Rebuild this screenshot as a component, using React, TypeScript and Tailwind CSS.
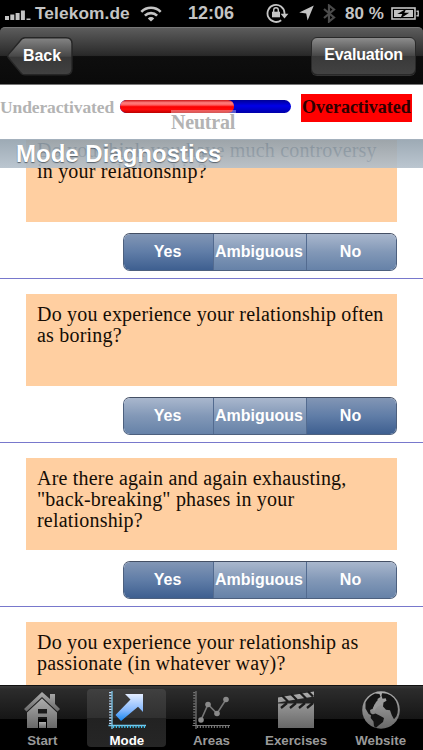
import { clsx } from 'clsx';

const QUESTIONS = [
  { lines: ['Do you think you have much controversy', 'in your relationship?'], answer: 'Yes' },
  { lines: ['Do you experience your relationship often', 'as boring?'], answer: 'No' },
  { lines: ['Are there again and again exhausting,', '"back-breaking" phases in your', 'relationship?'], answer: 'Yes' },
  { lines: ['Do you experience your relationship as', 'passionate (in whatever way)?'] },
];

const OPTIONS = [
  { label: 'Yes', width: 'w-[90px]' },
  { label: 'Ambiguous', width: 'w-[93px]' },
  { label: 'No', width: 'w-[89px]' },
];

const HELVETICA = "font-['Liberation_Sans',Arial,sans-serif]";
const PALATINO = "font-['Palatino','Liberation_Serif',serif]";

function StatusBar() {
  return (
    <div className="flex h-[27px] shrink-0 items-center bg-black text-[17.3px] font-bold leading-[27px] text-[#c4c4c4]">
      <svg width="26" height="12" viewBox="0 0 26 12" className="ml-[5px] mt-[2px]" fill="#c4c4c4">
        <rect x="0" y="7" width="4" height="4" />
        <rect x="5.3" y="5.5" width="4" height="5.5" />
        <rect x="10.6" y="4" width="4" height="7" />
        <rect x="15.9" y="1.5" width="4" height="9.5" />
        <rect x="21.5" y="9.5" width="4" height="1.5" />
      </svg>
      <span className="ml-[4px] w-[95px] whitespace-nowrap tracking-[0.1px]">Telekom.de</span>
      <svg width="22" height="16" viewBox="0 0 22 16" className="ml-[10px]" fill="none" stroke="#c4c4c4" strokeWidth="2.6">
        <path d="M1.3 5.8a13.7 13.7 0 0 1 19.4 0" />
        <path d="M4.9 9.7a8.6 8.6 0 0 1 12.2 0" />
        <path d="M11 15.6 7.8 12.4a4.5 4.5 0 0 1 6.4 0Z" fill="#c4c4c4" stroke="none" />
      </svg>
      <span className="ml-[26px] w-[48px] text-[18px]">12:06</span>
      <svg width="23" height="20" viewBox="0 0 23 20" className="ml-[30px] -mt-px" fill="none" stroke="#c4c4c4" strokeWidth="1.8">
        <path d="M15.2 17.2A8.5 8.5 0 1 1 18.5 10v2" />
        <path d="M14.6 10.7h7.8l-3.9 4.8Z" fill="#c4c4c4" stroke="none" />
        <rect x="6" y="8.7" width="8" height="5.6" fill="#c4c4c4" stroke="none" />
        <path d="M7.7 9V7.1a2.3 2.3 0 0 1 4.6 0V9" strokeWidth="1.4" />
      </svg>
      <svg width="15" height="16" viewBox="0 0 15 16" className="ml-[10px] -mt-px" fill="#c4c4c4">
        <path d="M14.8.4 8.6 15.6 7.2 8.6.2 7.4Z" />
      </svg>
      <svg width="13" height="19" viewBox="0 0 13 19" className="ml-[9px] -mt-px" fill="none" stroke="#4b4b4b" strokeWidth="2.2">
        <path d="m1 5 10 8.5-5 4V1.5l5 4L1 14" />
      </svg>
      <span className="ml-[9px] w-[42px] whitespace-nowrap text-[17px] font-semibold">80 %</span>
      <svg width="29" height="13" viewBox="0 0 29 13" className="ml-[4px] -mt-px">
        <rect x="1" y="1" width="23" height="11" fill="none" stroke="#c4c4c4" strokeWidth="1.6" />
        <rect x="3" y="3" width="19" height="7" fill="#c4c4c4" />
        <path d="M25.5 4.3h1.7v4.4h-1.7" fill="none" stroke="#c4c4c4" strokeWidth="1.4" />
        <path d="m15.3 1.7-9 5.4h5l-2 4.3 9-5.6h-5Z" fill="#000" />
      </svg>
    </div>
  );
}

function NavBar() {
  return (
    <div className="h-[57px] shrink-0 bg-black">
      <div className="flex h-full items-start justify-between rounded-t-[5px] border-t border-[#777] bg-[linear-gradient(#5c5c5c_0%,#292929_49%,#0e0e0e_51%,#0a0a0a_100%)] px-[7px] pt-[9px] text-[16px] font-bold text-white [text-shadow:0_-1px_0_#111]">
        <button className="relative h-[39px] w-[66px]">
          <svg width="66" height="39" viewBox="0 0 66 39" className="absolute inset-0">
            <defs>
              <linearGradient id="back" x2="0" y2="1">
                <stop offset="0" stopColor="#858585" />
                <stop offset=".5" stopColor="#474747" />
                <stop offset=".52" stopColor="#383838" />
                <stop offset="1" stopColor="#414141" />
              </linearGradient>
            </defs>
            <path d="M18 .8h41Q65 .8 65 6.8v25q0 6-6 6H18q-3 0-5-3L1.5 21q-1.5-1.8 0-3.6L13 4Q15 .8 18 .8Z" fill="url(#back)" stroke="#262626" strokeWidth="1.4" />
          </svg>
          <span className="relative left-[2px] top-[-1px]">Back</span>
        </button>
        <button className="h-[38px] w-[105px] rounded-[6px] border border-[#292929] bg-[linear-gradient(#8c8c8c_0%,#484848_49%,#393939_51%,#424242_100%)] pb-[2px] tracking-[-0.25px] shadow-[0_1px_0_#333]">
          Evaluation
        </button>
      </div>
    </div>
  );
}

function ActivationScale() {
  return (
    <div className={clsx('relative flex h-[55px] shrink-0 items-start border-t border-[#777] bg-white pt-[9px] text-[18px] font-bold text-[#b3b3b3]', PALATINO)}>
      <span className="h-[28px] w-[120px] whitespace-nowrap text-[17.5px] leading-[26px] tracking-[-0.12px]">Underactivated</span>
      <div className="mt-[6px] h-[13px] w-[171px] overflow-hidden rounded-full bg-[linear-gradient(#000096,#0000e8_45%,#0000a9)]">
        <div className="h-full w-[114px] rounded-r-[6px] bg-[linear-gradient(#c91515_0%,#ff8080_22%,#ff6060_38%,#fa0000_52%,#ff0909_72%,#ba0000_100%)]" />
      </div>
      <span className="ml-[10px] h-[28px] w-[111px] whitespace-nowrap bg-[#ff0000] pl-px leading-[26px] tracking-[-0.02px] text-[#300000]">Overactivated</span>
      {/* Current value label sits over the lower edge of the bar */}
      <span className="absolute left-[171px] top-[25px] h-[25px] w-[65px] whitespace-nowrap bg-white/35 text-[20px] leading-[25px] tracking-[-0.2px]">Neutral</span>
    </div>
  );
}

function Segmented({ answer }: { answer: string }) {
  return (
    <div className="ml-auto flex h-[38px] w-[274px] overflow-hidden rounded-[7px] border border-[#4d607e] border-t-[#444f64] text-[16px] font-bold text-white [text-shadow:0_-1px_0_#4b5f7b]">
      {OPTIONS.map(({ label, width }) => (
        <button
          key={label}
          className={clsx(
            'h-full shrink-0 border-r border-[#536b90] pb-px pr-[2px] last:border-r-0',
            width,
            answer === label
              ? 'bg-[linear-gradient(#8296b5,#607da7_50%,#3e5f90)]'
              : 'bg-[linear-gradient(#a9b7cd,#8298b7_50%,#6682a8)]'
          )}
        >
          {label}
        </button>
      ))}
    </div>
  );
}

function QuestionList() {
  return (
    <div className="relative min-h-0 flex-1 overflow-hidden bg-white">
      <div className="-mt-[24px]">
        {QUESTIONS.map((question) => (
          <div key={question.lines[0]} className="h-[164px] border-b border-[#7878cc] pl-[26px] pr-[26px] pt-[15px]">
            <div className={clsx('h-[92px] w-[371px] bg-[#ffcfa1] pl-[11px] pt-[10px] text-[20px] leading-[21px] tracking-[0.2px] text-[#150d05]', PALATINO)}>
              {question.lines.map((line) => (
                <p key={line} className="whitespace-nowrap">{line}</p>
              ))}
            </div>
            {question.answer && (
              <div className="mt-[11px]">
                <Segmented answer={question.answer} />
              </div>
            )}
          </div>
        ))}
      </div>
      {/* Sticky section header */}
      <h2 className="absolute inset-x-0 top-0 h-[29px] border-t border-[#a4b1bd] bg-[linear-gradient(rgba(144,159,171,.88),rgba(180,192,203,.9))] pl-[16px] text-[24px] font-bold leading-[28px] text-white [text-shadow:0_1px_1px_#59636d]">
        Mode Diagnostics
      </h2>
    </div>
  );
}

function HouseIcon() {
  return (
    <svg width="38" height="38" viewBox="0 0 38 38" fill="url(#tab)">
      <path d="M1 18 19 1l8 7V3h5v10l5 5-2.5 2.5L19 6 3.5 20.5Z" />
      <path fillRule="evenodd" d="m4 21.5 15-14 15 14V37H24V26h-9v11H4ZM15 18v4.500h9V18Z" />
      <path d="M16 31h7v6h-7Z" />
    </svg>
  );
}

function ModeIcon() {
  return (
    <svg width="40" height="40" viewBox="0 0 40 40">
      <defs>
        <linearGradient id="arrow" x2="0" y2="1">
          <stop offset="0" stopColor="#e4edff" />
          <stop offset=".6" stopColor="#85b8fd" />
          <stop offset="1" stopColor="#1787ef" />
        </linearGradient>
      </defs>
      <path d="M5 1v38M1.500 35.500H39" fill="none" stroke="#79c9ed" strokeWidth="1.3" />
      <path d="M3.300 2v32" stroke="#c3dfff" strokeWidth="2.4" strokeDasharray="1.2 1.6" />
      <path d="M6 36.800h32" stroke="#42c4ef" strokeWidth="2.4" strokeDasharray="1.2 1.6" />
      <path d="M18 4h18v18l-5-5.200L14 31l-5.500-6L23.500 9.500Z" fill="url(#arrow)" />
    </svg>
  );
}

function AreasIcon() {
  return (
    <svg width="40" height="40" viewBox="0 0 40 40" fill="none" stroke="#777">
      <path d="M5 1v38M1.500 35.500H39" strokeWidth="1.2" />
      <path d="M3.300 2v32" strokeWidth="2.2" strokeDasharray="1.2 1.6" />
      <path d="M6 36.800h32" strokeWidth="2.2" strokeDasharray="1.2 1.6" />
      <path d="m10 30 7-15.500 9 9 9-14" strokeWidth="1.6" />
      <g fill="#8a8a8a" stroke="none">
        <circle cx="10" cy="30" r="2.8" />
        <circle cx="17" cy="14.500" r="2.8" />
        <circle cx="26" cy="23.500" r="2.8" />
        <circle cx="35" cy="9.500" r="2.800" />
      </g>
    </svg>
  );
}

function ClapperIcon() {
  return (
    <svg width="38" height="38" viewBox="0 0 38 38">
      <path d="M1 6.500 37 .500v5L1 11.500Zm0 6h36V37H1Z" fill="url(#tab)" />
      <path d="m5 4.500 6 6M14 3l6 6M23 1.500l6 6M31 .500l5 5M10 12l-6 5M19 12l-6 5M28 12l-6 5M36 12l-6 5" stroke="#1c1c1c" strokeWidth="2.3" />
    </svg>
  );
}

function EarthIcon() {
  return (
    <svg width="40" height="40" viewBox="0 0 40 40">
      <circle cx="20" cy="20" r="18.800" fill="url(#tab)" />
      {/* Land masses are cut out of the disc */}
      <g fill="#141414">
        <path d="M4.500 12.500Q8 6 14 3.500l4.500.500 1 3-3 2 .500 3-3.500 2.500-1.500 4-3 1.500.500 3 3.500 2.500-1 1.200-4.500-3-3-5.200Z" />
        <path d="M21 3.200q9-.5 14 8 3.500 8 .5 15l-2.500 3-2.200-4-1.800-5-4-.5-3-3.200.5-4 3-1.800-.8-2.500-3.200.5-1-3Z" />
        <path d="m10 25 4.500-1.500 4 2 4.500 2.500-1 4-4.500 3.500-2.500 2.200-2-1.500-.5-4.700-2.800-3.500Z" />
      </g>
      <path d="m15 12 4-4 3 2-1 4-5 3-3 4-1-3Z" fill="#999" />
    </svg>
  );
}

const TABS = [
  { label: 'Start', Icon: HouseIcon },
  { label: 'Mode', Icon: ModeIcon },
  { label: 'Areas', Icon: AreasIcon },
  { label: 'Exercises', Icon: ClapperIcon },
  { label: 'Website', Icon: EarthIcon },
];

function TabBar() {
  return (
    <div className="flex h-[65px] shrink-0 border-t border-[#111] bg-[linear-gradient(#3a3a3a_0,#2c2c2c_3px,#161616_33px,#000_33px)] pt-[3px]">
      <svg width="0" height="0" className="absolute">
        <defs>
          <linearGradient id="tab" x2="0" y2="1">
            <stop offset="0" stopColor="#adadad" />
            <stop offset="1" stopColor="#686868" />
          </linearGradient>
        </defs>
      </svg>
      {TABS.map(({ label, Icon }) => (
        <div key={label} className="flex flex-1 justify-center">
          <div
            className={clsx(
              'flex h-[58px] w-[79px] shrink-0 flex-col items-center rounded-[4px] text-[13.3px] font-bold',
              label === 'Mode' ? 'bg-[linear-gradient(#404040,#303030_50%,#222_50%,#262626)] text-white' : 'text-[#999]'
            )}
          >
            <div className="flex h-[41px] shrink-0 items-center">
              <Icon />
            </div>
            <span className="pt-px leading-[20px]">{label}</span>
          </div>
        </div>
      ))}
    </div>
  );
}

export default function App() {
  return (
    <main className={clsx('flex h-[750px] w-[423px] flex-col overflow-hidden bg-white', HELVETICA)}>
      <StatusBar />
      <NavBar />
      <ActivationScale />
      <QuestionList />
      <TabBar />
    </main>
  );
}
